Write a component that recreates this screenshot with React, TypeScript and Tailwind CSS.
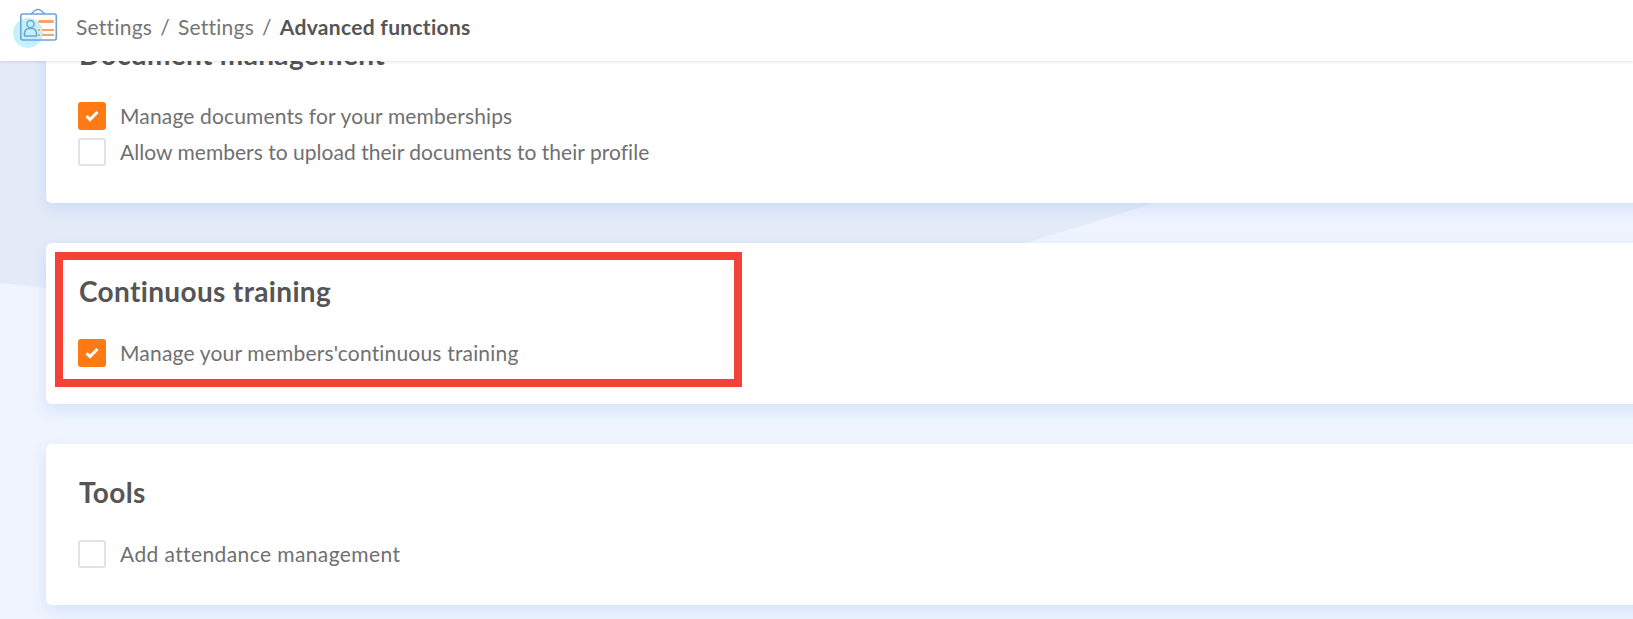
import React from "react";

const fontStack = "font-['Lato','Noto_Sans',sans-serif]";

const Checkbox = ({ checked }: { checked?: boolean }) => {
  if (checked) {
    return (
      <span className="flex h-[28px] w-[28px] shrink-0 items-center justify-center rounded-[3px] bg-[#ff7a14]">
        <svg width="14" height="12" viewBox="0 0 14 12" fill="none">
          <path d="M1.5 6.2 L5 9.6 L12.5 2" stroke="#fff" strokeWidth="3" />
        </svg>
      </span>
    );
  }
  return <span className="h-[28px] w-[28px] shrink-0 rounded-[3px] border-2 border-[#dfe2e6] bg-white" />;
};

const Option = ({ label, checked, tracking }: { label: string; checked?: boolean; tracking: string }) => (
  <label className="-ml-[1px] flex h-[28px] items-center gap-[14px]">
    <Checkbox checked={checked} />
    <span className={`text-[21px] text-[#707070] ${tracking}`}>{label}</span>
  </label>
);

const Card = ({ title, children }: { title: string; children: React.ReactNode }) => (
  <section className="-mr-4 rounded-[6px] bg-white pt-[32px] pr-4 pb-[37px] pl-[33px] shadow-[0_6px_16px_rgba(110,155,240,0.2)]">
    <h2 className="mb-[32px] h-[32px] text-[28px] leading-[32px] font-bold tracking-[0.35px] text-[#555555]">{title}</h2>
    <div className="flex flex-col gap-[8px]">{children}</div>
  </section>
);

const BadgeIcon = () => (
  <svg width="62" height="50" viewBox="0 0 62 50" fill="none" className="shrink-0">
    <circle cx="28" cy="33" r="15" fill="#c4f0fc" />
    <path d="M31 14 L35 10.5 Q38 8.5 41 10.5 L45 14" stroke="#6fa3d8" strokeWidth="1.5" />
    <rect x="20.8" y="14" width="35.5" height="26" rx="2" stroke="#6fa3d8" strokeWidth="1.6" />
    <circle cx="30.5" cy="24" r="3.6" stroke="#6fa3d8" strokeWidth="1.5" />
    <path d="M24.5 36 Q24 29 28.5 28.5 L32.5 28.5 Q37 29 36.5 36 Z" stroke="#6fa3d8" strokeWidth="1.5" />
    <rect x="38" y="20" width="16" height="3" rx="1.5" fill="#f8a468" />
    <rect x="38" y="29" width="2" height="2" fill="#f8a468" />
    <rect x="42" y="29" width="12" height="2" fill="#f8a468" />
    <rect x="38" y="34" width="2" height="2" fill="#f8a468" />
    <rect x="42" y="34" width="12" height="2" fill="#f8a468" />
  </svg>
);

export default function App() {
  return (
    <div className={`relative h-[619px] w-full overflow-hidden bg-[#eff4fe] ${fontStack}`}>
      {/* background blob behind the cards */}
      <svg className="absolute top-0 left-0" width="1633" height="619" viewBox="0 0 1633 619" fill="none">
        <path d="M0 0 H1400 L1155 203 L1026 243 Q600 340 46 288 Q20 285 0 283 Z" fill="#e4ebf8" />
      </svg>

      {/* TOP BAR */}
      <header className="absolute top-0 right-0 left-0 z-10 flex h-[61px] items-start bg-white shadow-[0_1px_3px_rgba(0,0,0,0.12)]">
        <BadgeIcon />
        <nav className="mt-[11px] ml-[14px] flex items-center gap-[8px] text-[21px] tracking-[0.25px] text-[#757575]">
          <span>Settings</span>
          <span>/</span>
          <span>Settings</span>
          <span>/</span>
          <span className="font-bold tracking-[0.3px] text-[#555555]">Advanced functions</span>
        </nav>
      </header>

      {/* CARDS */}
      <main className="relative flex flex-col gap-[40px] pt-[6px] pl-[46px]">
        <Card title="Document management">
          <Option label="Manage documents for your memberships" checked tracking="tracking-[0.15px]" />
          <Option label="Allow members to upload their documents to their profile" tracking="tracking-[0.03px]" />
        </Card>
        <div className="relative">
          <Card title="Continuous training">
            <Option label="Manage your members'continuous training" checked tracking="tracking-[0.18px]" />
          </Card>
          <div className="absolute top-[9px] left-[9px] h-[135px] w-[687px] border-[8px] border-[#f44336]" />
        </div>
        <Card title="Tools">
          <Option label="Add attendance management" tracking="tracking-[0.4px]" />
        </Card>
      </main>
    </div>
  );
}
